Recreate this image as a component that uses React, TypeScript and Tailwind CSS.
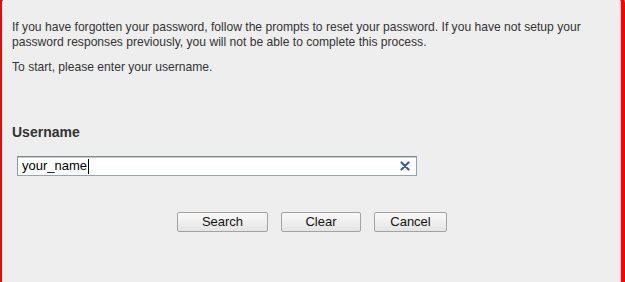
export default function App() {
  return (
    <div className="h-[282px] w-[625px] overflow-hidden bg-[#eeeeee]" style={{ fontFamily: '"Liberation Sans", Arial, sans-serif' }}>
      <div className="-mt-[4px] h-[300px] rounded-[7px] border-[3px] border-l-[3px] border-r-[4px] border-[#ff0000] -ml-px pl-[10px] pr-[20px] pt-[21px] text-[#333333]">
        {/* Intro */}
        <p className="text-[12.1px] leading-[15px]">
          If you have forgotten your password, follow the prompts to reset your password. If you have not setup your
          password responses previously, you will not be able to complete this process.
        </p>
        <p className="mt-[10px] text-[12.1px] leading-[15px]">To start, please enter your username.</p>

        {/* Username */}
        <div className="mt-[49px] text-[14px] font-bold leading-[17px] text-[#333333]">Username</div>
        <div className="mt-[15px] ml-[5px] flex h-[20px] w-[400px] items-center border border-[#8ea4c1] border-t-[#7b8794] border-l-[#8c98a8] bg-white pl-[4px] pr-[6px] shadow-[inset_0_1px_0_#c8cdd4]">
          <span className="text-[13px] leading-[16px] text-black">your_name</span>
          <span className="ml-px h-[15px] w-px bg-black" />
          <span className="flex-1" />
          <svg width="10" height="10" viewBox="0 0 10 10">
            <path d="M1.5 1.5 L8.5 8.5 M8.5 1.5 L1.5 8.5" stroke="#3d5c99" strokeWidth="2.2" strokeLinecap="round" />
          </svg>
        </div>

        {/* Actions */}
        <div className="mt-[36px] -ml-[10px] flex w-[625px] justify-center gap-[13px] pr-[5px]">
          <button className="h-[20px] w-[91px] rounded-[2px] border border-[#a3a3a3] bg-gradient-to-b from-[#fafafa] to-[#e4e4e4] text-[13px] leading-[16px] text-[#111111]">
            Search
          </button>
          <button className="h-[20px] w-[80px] rounded-[2px] border border-[#a3a3a3] bg-gradient-to-b from-[#fafafa] to-[#e4e4e4] text-[13px] leading-[16px] text-[#111111]">
            Clear
          </button>
          <button className="h-[20px] w-[73px] rounded-[2px] border border-[#a3a3a3] bg-gradient-to-b from-[#fafafa] to-[#e4e4e4] text-[13px] leading-[16px] text-[#111111]">
            Cancel
          </button>
        </div>
      </div>
    </div>
  );
}
